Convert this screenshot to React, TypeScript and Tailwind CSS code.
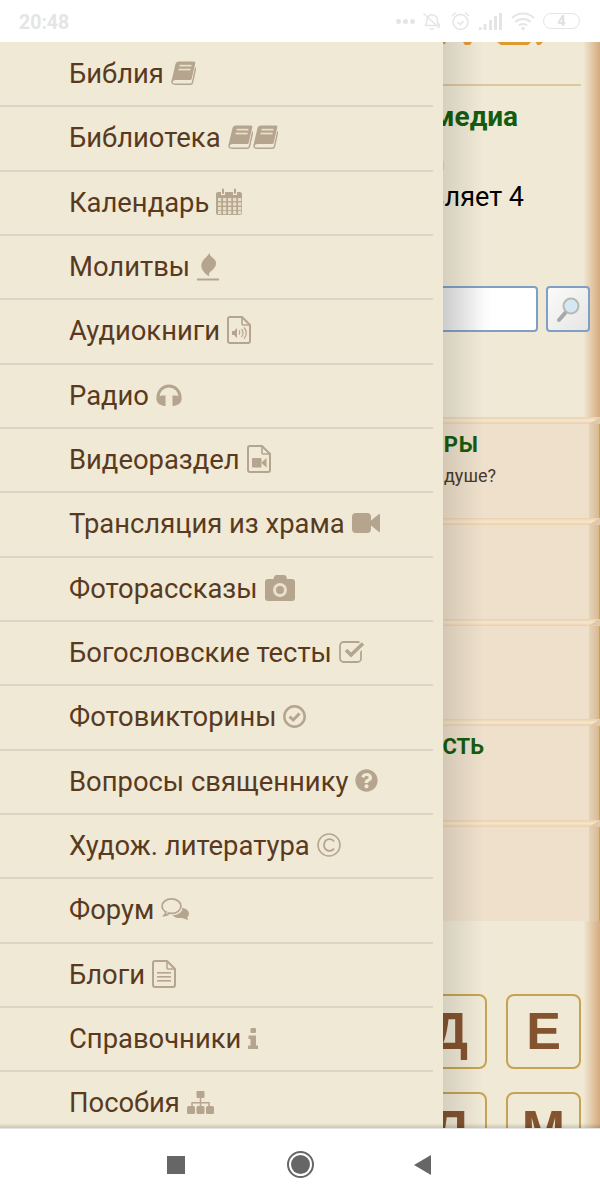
import React from "react";
import { FaQuestionCircle } from "react-icons/fa";

const C = "#b5a58f";
const BG = "#f0e9d6";

const Book = () => (
  <svg width="25" height="24" viewBox="0 0 25 24" className="shrink-0">
    <path d="M7.500 0.500H23Q24.700 0.500 24.300 2.200L20.700 17.800Q20.400 19 19 19H4.500Q2.300 19 1.300 21L0.500 20L4.500 3Q5 0.500 7.500 0.500z" fill={C} />
    <path d="M1.300 19.800Q0.300 23.300 4 23.300H19.300Q21 23.300 21.400 21.800L24.800 6.500" fill="none" stroke={C} strokeWidth="1.400" />
    <rect x="8.500" y="3.800" width="12" height="1.700" fill="#e9e1cc" />
    <rect x="7.600" y="7.700" width="12" height="1.700" fill="#e9e1cc" />
  </svg>
);

const Calendar = () => (
  <svg width="26" height="27" viewBox="0 0 26 27" fill={C} className="shrink-0">
    <path d="M2 4h3v3h4V4h8v3h4V4h3c1 0 2 .8 2 2v19c0 1-1 2-2 2H2c-1 0-2-1-2-2V6c0-1.200 1-2 2-2z" />
    <rect x="6" y="0.500" width="2" height="5.500" rx="1" />
    <rect x="18" y="0.500" width="2" height="5.500" rx="1" />
    <g fill="#e6dec9">
      {[2, 7, 12, 17, 22].map((x) =>
        [10, 14.5, 19, 23].map((y) => <rect key={`${x}-${y}`} x={x} y={y} width="3.300" height="3.200" />)
      )}
    </g>
  </svg>
);

const Flame = () => (
  <svg width="22" height="29" viewBox="0 0 22 29" fill={C} className="shrink-0">
    <path d="M12.500 0C12 4 5.500 7 4.500 12C3.500 17 7 21 12.500 24.500C11 21.500 13 20 15.500 18C19 15 20 11 18 8C16 5.500 12 4 12.500 0z" />
    <rect x="0" y="26.500" width="22" height="2" />
  </svg>
);

const FileBase = ({ children }: { children?: React.ReactNode }) => (
  <svg width="24" height="28" viewBox="0 0 24 28" className="shrink-0">
    <path d="M3 1H15L23 9V25Q23 27 21 27H3Q1 27 1 25V3Q1 1 3 1z" fill="none" stroke={C} strokeWidth="2" />
    <path d="M15 1V8Q15 9 16 9H23" fill="none" stroke={C} strokeWidth="1.600" />
    {children}
  </svg>
);

const Headphones = () => (
  <svg width="26" height="22" viewBox="0 0 26 22" fill={C} className="shrink-0">
    <path d="M2 15.500V13A11 11 0 0 1 24 13V15.500" fill="none" stroke={C} strokeWidth="3" />
    <path d="M6 11.500H9.500V22H8C4 21 .5 19 .5 15.500C.5 13.500 3 12 6 11.500z" />
    <path d="M20 11.500H16.500V22H18C22 21 25.500 19 25.500 15.500C25.500 13.500 23 12 20 11.500z" />
  </svg>
);

const VideoCam = () => (
  <svg width="28" height="20" viewBox="0 0 28 20" fill={C} className="shrink-0">
    <rect x="0" y="0" width="19" height="20" rx="4" />
    <path d="M19 7.500L27 1Q28 .5 28 2V18Q28 19.500 27 19L19 12.500z" />
  </svg>
);

const Camera = () => (
  <svg width="30" height="26" viewBox="0 0 30 26" className="shrink-0">
    <path d="M3 4H8.500L9 2Q9.500 0 11.500 0H19Q21 0 21.500 2L22 4H27Q30 4 30 7V23Q30 26 27 26H3Q0 26 0 23V7Q0 4 3 4z" fill={C} />
    <circle cx="15" cy="15" r="5.500" fill={C} stroke="#e9e1cc" strokeWidth="3" />
  </svg>
);

const CheckSquare = () => (
  <svg width="26" height="22" viewBox="0 0 26 22" className="shrink-0">
    <rect x="1" y="1" width="21" height="20" rx="3.500" fill="none" stroke={C} strokeWidth="1.800" />
    <path d="M7 9.500L12 14.500L24 3" fill="none" stroke={BG} strokeWidth="7" />
    <path d="M7 9L12 14L24 2.500" fill="none" stroke={C} strokeWidth="3.600" />
  </svg>
);

const CheckCircle = () => (
  <svg width="23" height="23" viewBox="0 0 23 23" className="shrink-0">
    <circle cx="11.500" cy="11.500" r="10.200" fill="none" stroke={C} strokeWidth="2.500" />
    <path d="M6.500 11.500L10.200 15L16.500 8.500" fill="none" stroke={C} strokeWidth="3" />
  </svg>
);

const Copyright = () => (
  <svg width="24" height="24" viewBox="0 0 24 24" fill="none" stroke={C} className="shrink-0">
    <circle cx="12" cy="12" r="11" strokeWidth="1.500" />
    <path d="M17 8.500C15.500 5.800 11 5.300 8.800 7.500C6.300 10 6.500 14.500 8.800 16.500C11 18.500 15.500 18.200 17 15.500" strokeWidth="1.800" />
  </svg>
);

const Comments = () => (
  <svg width="28" height="22" viewBox="0 0 32 25" className="shrink-0">
    <path d="M24.500 11C29 12 32 14.500 32 18C32 19.500 31 21 30 22L31 25L24 22.700C20 23.500 15.500 22 13 19.500C19 19.500 24.500 16.500 24.500 11z" fill={C} />
    <ellipse cx="12" cy="9.300" rx="10.800" ry="8.300" fill={BG} stroke={C} strokeWidth="2" />
    <path d="M5.500 15.500C5.500 17.500 4.500 19 3.500 20C5.500 20 8 19 9.500 17.300" fill={BG} stroke={C} strokeWidth="2" />
  </svg>
);

const Info = () => (
  <svg width="10" height="21" viewBox="0 0 10 21" fill={C} className="shrink-0">
    <rect x="2.500" y="0" width="5.500" height="5" rx="1" />
    <path d="M.5 7.500H8V17.500H10V21H0V17.500H2.500V11H.5z" />
  </svg>
);

const Sitemap = () => (
  <svg width="27" height="23" viewBox="0 0 27 23" fill={C} className="shrink-0">
    <rect x="9.500" y="0" width="8" height="7" rx="1" />
    <path d="M12.750 7h1.500v4h8.500v4h-1.500v-2.500h-7v2.500h-1.500v-2.500h-7v2.500h-1.500v-4h8.500z" />
    <rect x="0" y="15" width="8" height="8" rx="1.500" />
    <rect x="9.500" y="15" width="8" height="8" rx="1.500" />
    <rect x="19" y="15" width="8" height="8" rx="1.500" />
  </svg>
);

const items: { label: string; icon: React.ReactNode }[] = [
  { label: "Библия", icon: <Book /> },
  { label: "Библиотека", icon: <span className="flex"><Book /><Book /></span> },
  { label: "Календарь", icon: <Calendar /> },
  { label: "Молитвы", icon: <Flame /> },
  {
    label: "Аудиокниги",
    icon: (
      <FileBase>
        <path d="M5 15h2l3-3v10l-3-3H5z" fill={C} />
        <path d="M12 14.500c1 1 1 3 0 4M14.500 13c2 2 2 6 0 8M17 11.500c3 3 3 8 0 11" fill="none" stroke={C} strokeWidth="1.200" />
      </FileBase>
    ),
  },
  { label: "Радио", icon: <Headphones /> },
  {
    label: "Видеораздел",
    icon: (
      <FileBase>
        <rect x="5" y="13" width="9.500" height="9.500" rx="1" fill={C} />
        <path d="M15 17l4.500-4v9.500l-4.500-4z" fill={C} />
      </FileBase>
    ),
  },
  { label: "Трансляция из храма", icon: <VideoCam /> },
  { label: "Фоторассказы", icon: <Camera /> },
  { label: "Богословские тесты", icon: <CheckSquare /> },
  { label: "Фотовикторины", icon: <CheckCircle /> },
  { label: "Вопросы священнику", icon: <FaQuestionCircle size={23} className="text-[#b5a58f] shrink-0" /> },
  { label: "Худож. литература", icon: <Copyright /> },
  { label: "Форум", icon: <Comments /> },
  {
    label: "Блоги",
    icon: (
      <FileBase>
        <rect x="5" y="12" width="14" height="1.600" fill={C} />
        <rect x="5" y="16" width="14" height="1.600" fill={C} />
        <rect x="5" y="20" width="14" height="1.600" fill={C} />
      </FileBase>
    ),
  },
  { label: "Справочники", icon: <Info /> },
  { label: "Пособия", icon: <Sitemap /> },
];

const G = "#e5e5e5";

const StatusIcons = () => (
  <div className="flex items-center">
    <div className="flex gap-[2px] items-center">
      <span className="w-[5px] h-[5px] rounded-full bg-[#e5e5e5]" />
      <span className="w-[5px] h-[5px] rounded-full bg-[#e5e5e5]" />
      <span className="w-[5px] h-[5px] rounded-full bg-[#e5e5e5]" />
    </div>
    <svg width="20" height="20" viewBox="0 0 20 20" fill="none" stroke={G} strokeWidth="1.500" className="ml-[7px]">
      <path d="M3 14.500c2-1.500 1.500-5 2.500-7.500C6.500 4.500 9 3.500 11 4c3 .5 4.500 3 4.500 6 0 2 .5 3.500 2.500 4.500H3M1.500 2.500l16 14.500M8 17c.5 1.800 3 1.800 4 0" />
    </svg>
    <svg width="19" height="20" viewBox="0 0 19 20" fill="none" stroke={G} strokeWidth="1.500" className="ml-[9px]">
      <circle cx="9.500" cy="11" r="7.500" />
      <path d="M6.500 11l3 2.500 3-3.500M1 5l4-3.500M18 5l-4-3.500" />
    </svg>
    <svg width="23" height="18" viewBox="0 0 23 18" fill={G} className="ml-[9px]">
      <rect x="0" y="15" width="2.500" height="3" />
      <rect x="4.500" y="12" width="3" height="6" />
      <rect x="10" y="8" width="3" height="10" />
      <rect x="15" y="4" width="3" height="14" />
      <rect x="20" y="1" width="3" height="17" />
    </svg>
    <svg width="24" height="19" viewBox="0 0 24 19" fill="none" stroke={G} strokeWidth="2" className="ml-[9px]">
      <path d="M1 6c6-6 16-6 22 0M4.500 10c4-4 11-4 15 0M8 13.500c2-2 6-2 8 0" />
      <circle cx="12" cy="16.500" r="1.800" fill={G} stroke="none" />
    </svg>
    <div className="ml-[8px] w-[37px] h-[16px] rounded-full border-[1.500px] border-[#e5e5e5] flex items-center justify-center text-[14px] font-bold leading-none text-[#e0e0e0]">
      4
    </div>
  </div>
);

const Card = ({
  title,
  titleClass = "",
  sub,
}: {
  title?: string;
  titleClass?: string;
  sub?: string;
}) => (
  <div className="flex flex-col h-[100.75px] mr-[-17px]">
    <div className="relative h-[7px] shrink-0 bg-gradient-to-b from-[#ebd0ab] via-[#f5e6cd] to-[#eccfab]">
      <div className="absolute right-0 top-0 w-[11px] h-full bg-[#e0c8a6] [clip-path:polygon(0_100%,100%_0,100%_100%)]" />
    </div>
    <div className="flex-1 min-h-0 flex">
      <div className="flex-1 min-w-0 bg-[#eee0cb] flex flex-col items-end pt-[8px]">
        {title && (
          <div className={`text-[22px] font-bold leading-[26px] text-[#155c0e] whitespace-nowrap ${titleClass}`}>{title}</div>
        )}
        {sub && <div className="text-[18px] leading-[20px] text-[#4a3a2c] mt-[8px] pr-[93px] whitespace-nowrap">{sub}</div>}
      </div>
      <div className="w-[11px] shrink-0 bg-gradient-to-r from-[#e6d3b8] to-[#d7b993] border-r border-[#c4a355]" />
    </div>
  </div>
);

const Tile = ({ ch }: { ch: string }) => (
  <div className="w-[75px] h-[75px] shrink-0 rounded-[8px] border-2 border-[#c4a355] flex items-center justify-center text-[52px] font-bold text-[#84532f] font-['Liberation_Sans',sans-serif]">
    {ch}
  </div>
);

export default function App() {
  return (
    <div className="w-[600px] h-[1200px] flex flex-col bg-white overflow-hidden font-['Roboto',sans-serif]">
      <header className="h-[42px] shrink-0 flex items-center justify-between pl-[19px] pr-[20px]">
        <span className="text-[19.500px] font-bold text-[#e5e5e5] pt-[3px]">20:48</span>
        <StatusIcons />
      </header>

      <main className="relative flex-1 min-h-0 overflow-hidden">
        {/* page behind the drawer */}
        <div className="h-full flex bg-[#f0e9d6]">
          <div className="relative z-10 w-[583px] shrink-0 flex flex-col">
            <div className="h-[44px] shrink-0 border-b-2 border-[#dcc79c] mr-[2px]">
              <svg width="140" height="4" viewBox="0 0 140 4" className="block ml-[443px]" fill="#e09a32">
                <path d="M0 0h3l-1 2H0zM20 0h9l-2 3h-5zM54 0h34l-3 3H58zM93 0h7l-3 3h-3z" />
              </svg>
            </div>
            <div className="flex justify-end pr-[65px] pt-[14px] text-[28px] leading-[34px] font-bold text-[#155c0e] whitespace-nowrap">
              Мультимедиа
            </div>
            <div className="flex justify-end pr-[139px] mt-[21px] text-[16px] leading-[20px] text-black whitespace-nowrap">
              Сегодня
            </div>
            <div className="flex justify-end pr-[59px] mt-[7px] text-[27px] leading-[30px] text-black whitespace-nowrap">
              Составляет 4
            </div>
            <div className="flex justify-end gap-[8px] mr-[-7px] mt-[74px]">
              <div className="w-[200px] h-[46px] rounded-[4px] border-2 border-[#7f9fc6] bg-[linear-gradient(90deg,#e4e4e4_52%,#ffffff_78%)]" />
              <div className="w-[44px] h-[46px] shrink-0 rounded-[4px] border-2 border-[#7f9fc6] bg-gradient-to-br from-[#fbfbfb] to-[#e5e5e3] flex items-center justify-center">
                <svg width="28" height="30" viewBox="0 0 28 30">
                  <path d="M12 18L5 26" stroke="#a8a8a8" strokeWidth="4" strokeLinecap="round" />
                  <circle cx="17" cy="12" r="7.500" fill="#d3e7f4" stroke="#b9b9b1" strokeWidth="2" />
                </svg>
              </div>
            </div>
            <div className="mt-[85px] flex flex-col">
              <Card title="АЗБУКА ВЕРЫ" titleClass="pr-[110px] tracking-[1px]" sub="Что лучше душе?" />
              <Card />
              <Card />
              <Card title="НОВОСТЬ" titleClass="pr-[105px]" />
              <Card />
            </div>
            <div className="flex justify-end gap-[19px] pr-[2px] mt-[73px]">
              <Tile ch="Д" />
              <Tile ch="Е" />
            </div>
            <div className="flex justify-end gap-[19px] pr-[2px] mt-[23px]">
              <Tile ch="Л" />
              <Tile ch="М" />
            </div>
          </div>
          <div className="flex-1 bg-gradient-to-r from-[#f0e9d6] to-[#d5ab7d]" />
        </div>

        {/* drawer */}
        <nav className="absolute z-20 left-0 top-0 bottom-0 w-[443px] bg-[#f0e9d6] pt-[1px]">
          {items.map((it) => (
            <div
              key={it.label}
              className="h-[64.33px] w-[433px] border-b-2 border-[#ddd5c3] flex items-center gap-[7px] pl-[69px] pb-[2px] whitespace-nowrap"
            >
              <span className="text-[27.400px] leading-none pt-[3px] text-[#593a20]">{it.label}</span>
              {it.icon}
            </div>
          ))}
        </nav>
        {/* drawer shadow */}
        <div className="absolute z-20 left-[443px] top-0 bottom-0 w-[40px] bg-gradient-to-r from-[#0000001c] to-transparent pointer-events-none" />
        <div className="absolute z-20 left-0 right-0 bottom-0 h-[5px] bg-gradient-to-b from-transparent to-[#00000026] pointer-events-none" />
      </main>

      <footer className="h-[72px] shrink-0 border-t border-[#e3e3e3] flex items-center">
        <div className="w-[18px] h-[18px] bg-[#666666] ml-[167px]" />
        <div className="w-[27px] h-[27px] rounded-full border-2 border-[#666666] ml-[102px] flex items-center justify-center">
          <div className="w-[19px] h-[19px] rounded-full bg-[#666666]" />
        </div>
        <svg width="17" height="20" viewBox="0 0 17 20" className="ml-[100px]">
          <path d="M17 0v20L0 10z" fill="#666666" />
        </svg>
      </footer>
    </div>
  );
}
